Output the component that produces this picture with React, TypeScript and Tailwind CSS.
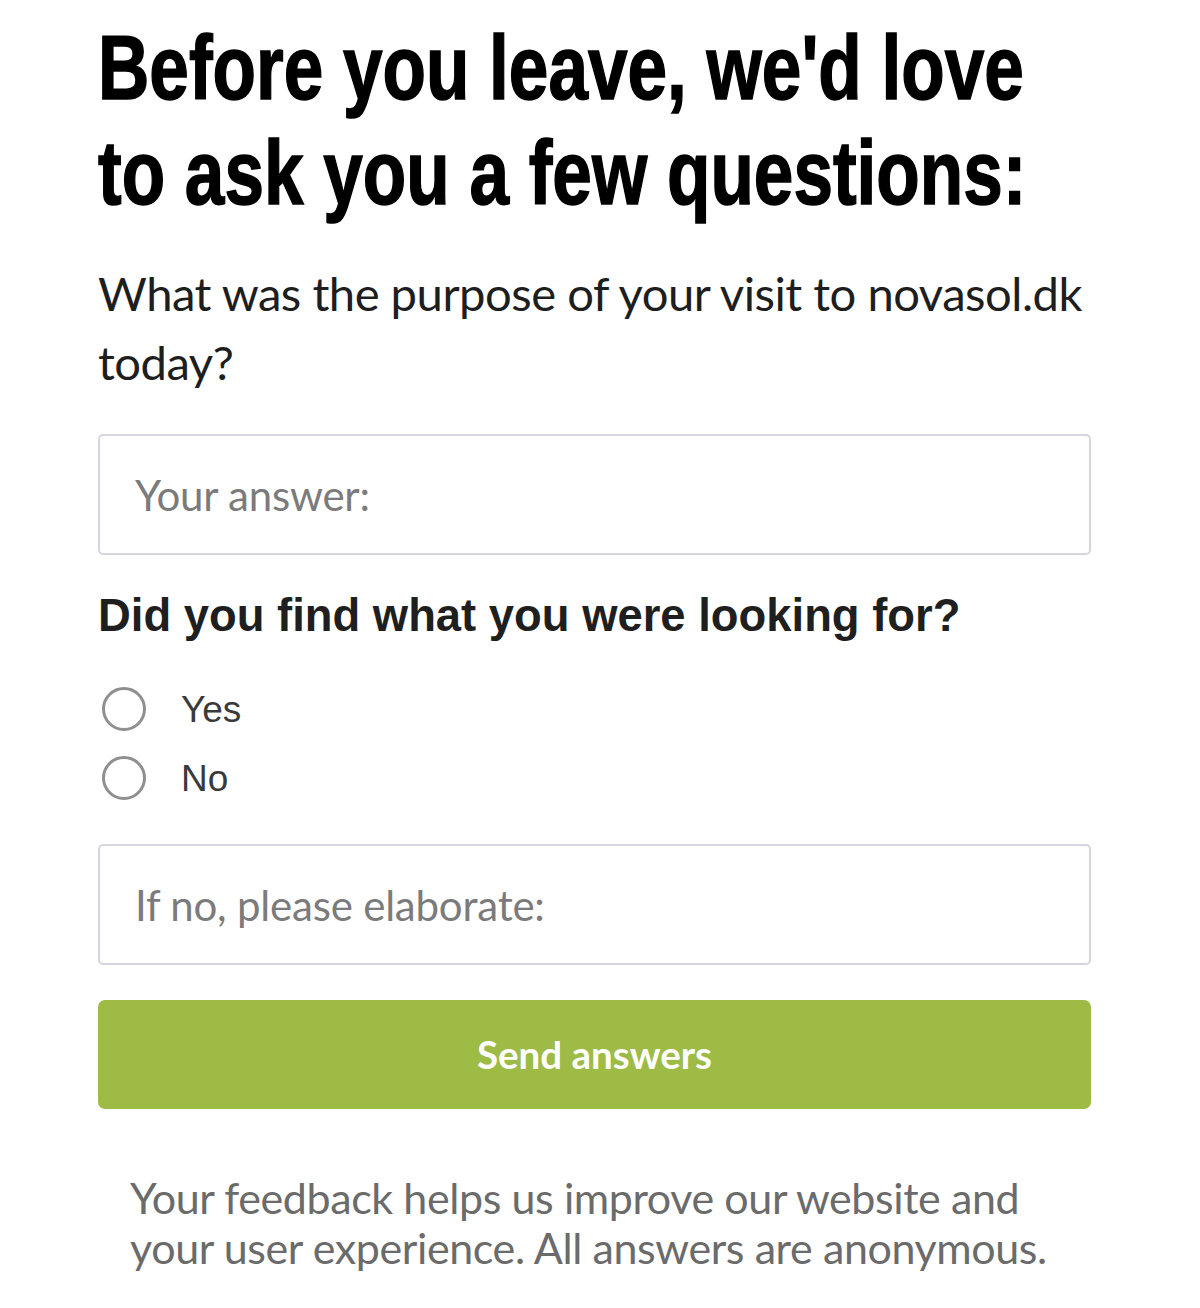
import React from "react";

export default function App() {
  return (
    <div className="min-h-[1308px] w-[1200px] bg-white overflow-hidden">
      <div className="w-[993px] ml-[98px] pt-[16px] flex flex-col">
        <h1 className="font-['Liberation_Sans',Arial,sans-serif] font-bold text-[90px] leading-[105px] text-black whitespace-nowrap scale-x-[0.79] origin-left [-webkit-text-stroke:1.5px_black]">
          Before you leave, we'd love
          <br />
          to ask you a few questions:
        </h1>

        <p className="mt-[32px] font-['Lato',sans-serif] text-[47.2px] leading-[69px] text-[#1e1e1e] whitespace-nowrap tracking-[-0.5px]">
          What was the purpose of your visit to novasol.dk
          <br />
          today?
        </p>

        <input
          type="text"
          placeholder="Your answer:"
          className="mt-[38px] h-[121px] w-full rounded-[5px] border-2 border-[#d6d6de] bg-white pl-[35px] font-['Lato',sans-serif] text-[42px] text-[#333] placeholder:text-[#7b7b7b] outline-none tracking-[-0.2px]"
        />

        <p className="mt-[34px] font-['Liberation_Sans',Arial,sans-serif] font-bold text-[45.4px] leading-[53px] text-[#1f1f1f] whitespace-nowrap">
          Did you find what you were looking for?
        </p>

        <div className="mt-[45px] ml-[4px] flex flex-col gap-[25px]">
          {["Yes", "No"].map((label) => (
            <label key={label} className="flex items-center h-[44px] gap-[35px] cursor-pointer">
              <span className="w-[44px] h-[44px] rounded-full border-[3px] border-[#8f8f8f] bg-white shrink-0" />
              <span className="font-['Liberation_Sans',Arial,sans-serif] text-[37px] text-[#3a3a3a] leading-none">
                {label}
              </span>
            </label>
          ))}
        </div>

        <input
          type="text"
          placeholder="If no, please elaborate:"
          className="mt-[44px] h-[121px] w-full rounded-[5px] border-2 border-[#d6d6de] bg-white pl-[35px] font-['Lato',sans-serif] text-[42px] text-[#333] placeholder:text-[#7b7b7b] outline-none tracking-[-0.2px]"
        />

        <button
          type="button"
          className="mt-[35px] h-[109px] w-full rounded-[7px] bg-[#9dbb45] text-white font-['Lato',sans-serif] font-bold text-[38.5px]"
        >
          Send answers
        </button>

        <p className="mt-[64px] pl-[32px] font-['Lato',sans-serif] text-[43px] leading-[50px] text-[#6b6b6b] whitespace-nowrap tracking-[-0.4px]">
          Your feedback helps us improve our website and
          <br />
          your user experience. All answers are anonymous.
        </p>
      </div>
    </div>
  );
}
